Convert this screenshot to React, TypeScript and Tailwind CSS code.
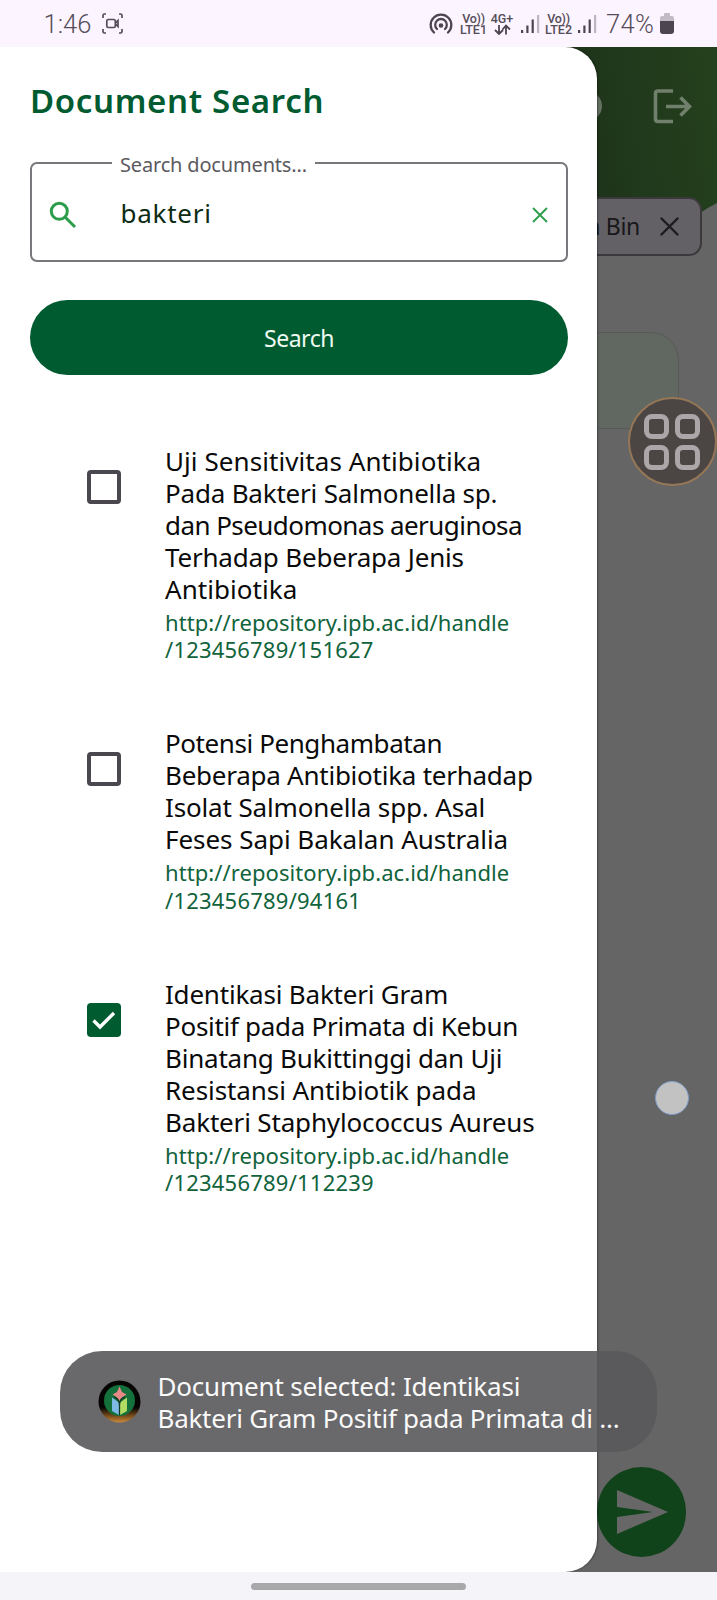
type DocLine = { text: string; tracking: string };
type Doc = { title: DocLine[]; url: DocLine[]; checked: boolean };

const docs: Doc[] = [
  {
    checked: false,
    title: [
      { text: "Uji Sensitivitas Antibiotika", tracking: "tracking-[0.07px]" },
      { text: "Pada Bakteri Salmonella sp.", tracking: "tracking-[-0.2px]" },
      { text: "dan Pseudomonas aeruginosa", tracking: "tracking-[-0.56px]" },
      { text: "Terhadap Beberapa Jenis", tracking: "tracking-[-0.2px]" },
      { text: "Antibiotika", tracking: "tracking-[0.05px]" },
    ],
    url: [
      { text: "http://repository.ipb.ac.id/handle", tracking: "tracking-[0.07px]" },
      { text: "/123456789/151627", tracking: "tracking-[0.2px]" },
    ],
  },
  {
    checked: false,
    title: [
      { text: "Potensi Penghambatan", tracking: "tracking-[-0.42px]" },
      { text: "Beberapa Antibiotika terhadap", tracking: "tracking-[-0.25px]" },
      { text: "Isolat Salmonella spp. Asal", tracking: "tracking-[-0.15px]" },
      { text: "Feses Sapi Bakalan Australia", tracking: "tracking-[-0.04px]" },
    ],
    url: [
      { text: "http://repository.ipb.ac.id/handle", tracking: "tracking-[0.07px]" },
      { text: "/123456789/94161", tracking: "tracking-[0.22px]" },
    ],
  },
  {
    checked: true,
    title: [
      { text: "Identikasi Bakteri Gram", tracking: "tracking-[-0.2px]" },
      { text: "Positif pada Primata di Kebun", tracking: "tracking-[-0.29px]" },
      { text: "Binatang Bukittinggi dan Uji", tracking: "tracking-[-0.22px]" },
      { text: "Resistansi Antibiotik pada", tracking: "tracking-[-0.08px]" },
      { text: "Bakteri Staphylococcus Aureus", tracking: "tracking-[-0.16px]" },
    ],
    url: [
      { text: "http://repository.ipb.ac.id/handle", tracking: "tracking-[0.07px]" },
      { text: "/123456789/112239", tracking: "tracking-[0.22px]" },
    ],
  },
];

function SignalBars() {
  return (
    <svg className="h-5 w-[19px] shrink-0" viewBox="0 0 19 20" fill="#4d4650">
      <rect x="0" y="16" width="2.2" height="3" />
      <rect x="5.3" y="11.5" width="2.2" height="7.5" />
      <rect x="10.6" y="5.5" width="2.2" height="13.5" />
      <rect x="16" y="1" width="2.2" height="18" fill="#bdb6c0" />
    </svg>
  );
}

function StatusBar() {
  return (
    <header className="flex h-[47px] shrink-0 items-center bg-[#fcf4ff] pl-[43.500px] font-[Roboto,sans-serif] text-[#554e58]">
      <span className="w-[58px] text-[25.500px] leading-[30px] font-light">1:46</span>
      <svg className="h-[21px] w-[21px]" viewBox="0 0 21 21" fill="none" stroke="#554e58" strokeWidth="1.7">
        <path d="M1 5V2.5Q1 1 2.5 1H4M17 1h1.500Q20 1 20 2.500V5M1 16v2.500Q1 20 2.500 20H4M17 20h1.500Q20 20 20 18.500V16" />
        <rect x="4.800" y="6.500" width="8.500" height="8" rx="1.500" />
        <path d="M13.500 9.800 16 7.500v6l-2.500-2.300" />
      </svg>
      <svg className="ml-[306.500px] h-[22px] w-[24px]" viewBox="0 0 24 22" fill="none" stroke="#4d4650" strokeWidth="2.300" strokeLinecap="round">
        <path d="M5 19.500A10.300 10.300 0 1 1 19 19.500" />
        <path d="M8 16A5.800 5.800 0 1 1 16 16" />
        <circle cx="12" cy="12.500" r="1.200" fill="#4d4650" />
      </svg>
      <div className="ml-[7px] flex w-[27px] flex-col items-center text-[12.500px] leading-[11px] font-medium">
        <span className="tracking-[-0.3px]">Vo))</span>
        <span>LTE1</span>
      </div>
      <div className="ml-[3px] flex w-[24px] flex-col items-center text-[12.500px] leading-[11px] font-medium">
        <span>4G+</span>
        <svg className="h-[11px] w-[17px]" viewBox="0 0 17 11" fill="none" stroke="#4d4650" strokeWidth="1.800">
          <path d="M5 1v8.500M1 6l4 4 4-4M12 10.500V2M8.500 5.500 12 1.500l4 4" />
        </svg>
      </div>
      <div className="ml-[7px]"><SignalBars /></div>
      <div className="ml-[5px] flex w-[27px] flex-col items-center text-[12.500px] leading-[11px] font-medium">
        <span className="tracking-[-0.3px]">Vo))</span>
        <span>LTE2</span>
      </div>
      <div className="ml-[6px]"><SignalBars /></div>
      <span className="ml-[9px] w-[54px] text-[25.500px] leading-[30px] font-light tracking-[0.3px]">74%</span>
      <svg className="h-[21px] w-[14px] shrink-0" viewBox="0 0 14 21">
        <path d="M4 1Q4 0 5 0h4q1 0 1 1v2h2q2 0 2 2v4H0V5q0-2 2-2h2z" fill="#c3bcc6" />
        <path d="M0 8h14v10q0 3-3 3H3q-3 0-3-3z" fill="#4d4650" />
      </svg>
    </header>
  );
}

function Backdrop() {
  return (
    <div className="absolute inset-0 overflow-hidden bg-[#656565]">
      <svg className="absolute top-0 right-0 h-[190px] w-[160px]" viewBox="0 0 160 190">
        <defs>
          <linearGradient id="leaf" x1="0" y1="0.600" x2="1" y2="0.400">
            <stop offset="0.200" stopColor="#1e341b" />
            <stop offset="1" stopColor="#24401c" />
          </linearGradient>
        </defs>
        <path d="M0 0H160V156Q152 160 143 166L120 176L0 190Z" fill="url(#leaf)" />
      </svg>
      <div className="absolute top-[44px] left-[572px] size-[30px] rounded-full bg-[#667063]" />
      <svg className="absolute top-[42px] left-[653px] h-[35px] w-[39px]" viewBox="0 0 39 35" fill="none" stroke="#71806c" strokeWidth="3.600">
        <path d="M20 2H5Q2.500 2 2.500 4.500v25.500Q2.500 32.500 5 32.500h15M13 17.500h23.500M27.500 8.500l9 9-9 9" />
      </svg>
      <div className="absolute top-[150px] left-[480px] flex h-[59px] w-[222px] items-center justify-end rounded-[13px] border-2 border-[#3b393c] bg-[#636165] pr-[21px] font-['Noto_Sans',sans-serif] text-[#18171a]">
        <span className="-mt-[2px] text-[23px] leading-[32px] tracking-[-0.3px] whitespace-nowrap">Kebun Bin</span>
        <svg className="ml-[20px] size-[19px]" viewBox="0 0 19 19" stroke="#1d1b1f" strokeWidth="2.400" strokeLinecap="round">
          <path d="M1.500 1.500l16 16M17.500 1.500l-16 16" />
        </svg>
      </div>
      <div className="absolute top-[285px] left-[400px] h-[97px] w-[279px] rounded-[28px] border-[1.500px] border-[#585a58] bg-[#616761]" />
      <div className="absolute top-[1420px] left-[597px] flex h-[90px] w-[89px] items-center justify-center rounded-full bg-[#10431a] pl-[1px]">
        <svg className="h-[44px] w-[51px]" viewBox="0 0 51 44" fill="#676767">
          <path d="M0 0 51 22 0 44V27L36 22 0 17Z" />
        </svg>
      </div>
    </div>
  );
}

function FloatingMenu() {
  return (
    <>
      <div className="absolute top-[350px] left-[628px] flex size-[89px] items-center justify-center rounded-full border-2 border-[#957757] bg-[#4a4442]/95 pr-[2px]">
        <div className="grid grid-cols-2 gap-[6px]">
          {[0, 1, 2, 3].map((n) => (
            <span key={n} className="size-[25px] rounded-[8px] border-[5px] border-[#aba7a8]" />
          ))}
        </div>
      </div>
      <div className="absolute top-[1034px] left-[655px] size-[34px] rounded-full border border-[#7f9cc9] bg-[#c2c2c3]" />
    </>
  );
}

function Checkbox({ checked }: { checked: boolean }) {
  return checked ? (
    <span className="mt-[25px] flex size-[34px] shrink-0 items-center justify-center rounded-[4px] bg-[#005b30]">
      <svg className="h-[20px] w-[24px]" viewBox="0 0 24 20" fill="none" stroke="#fff" strokeWidth="3.400">
        <path d="M1.500 10.500l6.500 6.500L22 3" />
      </svg>
    </span>
  ) : (
    <span className="mt-[25px] size-[34px] shrink-0 rounded-[4px] border-[4px] border-[#4a474e]" />
  );
}

function Drawer() {
  return (
    <aside className="absolute top-0 left-0 h-[1525px] w-[597px] rounded-r-[32px] bg-white pl-[30px] shadow-[1px_0_2px_rgba(0,0,0,0.35)]">
      <h1 className="pt-[31px] text-[33px] leading-[46px] font-semibold tracking-[0.66px] whitespace-nowrap text-[#005b30]">
        Document Search
      </h1>
      <div className="relative mt-[38px] flex h-[100px] w-[538px] items-center rounded-[7px] border-2 border-[#79767c]">
        <span className="absolute -top-[14px] left-[80px] bg-white px-[8px] text-[20px] leading-[30px] tracking-[-0.17px] whitespace-nowrap text-[#5b595e]">
          Search documents...
        </span>
        <svg className="mt-[5px] ml-[17px] size-[28px]" viewBox="0 0 28 28" fill="none" stroke="#2c9e4b" strokeWidth="3">
          <circle cx="10.300" cy="10.300" r="8" />
          <path d="M16 16l10 10" />
        </svg>
        <span className="mt-[2px] ml-[43.500px] text-[26px] leading-[36px] tracking-[0.75px] text-[#0b2b12]">bakteri</span>
        <svg className="mt-[6px] mr-[18px] ml-auto size-[16px]" viewBox="0 0 16 16" stroke="#2c9e4b" strokeWidth="1.900">
          <path d="M1 1l14 14M15 1 1 15" />
        </svg>
      </div>
      <button className="mt-[38px] flex h-[75px] w-[538px] items-center justify-center rounded-full bg-[#005b30] pt-[1px] text-[23px] leading-[32px] tracking-[-0.5px] text-[#eefaf1]">
        Search
      </button>
      <ul className="mt-[69.500px] flex flex-col gap-[63.500px] pl-[57px]">
        {docs.map((doc, i) => (
          <li key={i} className="flex items-start">
            <Checkbox checked={doc.checked} />
            <div className="ml-[44px]">
              <p className="text-[26px] leading-[32px] text-[#0a0a0a]">
                {doc.title.map((l) => (
                  <span key={l.text} className={`block w-fit whitespace-nowrap ${l.tracking}`}>{l.text}</span>
                ))}
              </p>
              <p className="mt-[4px] text-[22px] leading-[27.500px] text-[#10633b]">
                {doc.url.map((l) => (
                  <span key={l.text} className={`block w-fit whitespace-nowrap ${l.tracking}`}>{l.text}</span>
                ))}
              </p>
            </div>
          </li>
        ))}
      </ul>
    </aside>
  );
}

function Toast() {
  return (
    <div className="absolute top-[1304px] left-[60px] flex h-[101px] w-[597px] items-center rounded-[42px] bg-[#59585a]/90 pl-[38px]">
      <svg className="size-[43px] shrink-0" viewBox="0 0 43 43">
        <defs>
          <linearGradient id="ring" x1="0" y1="0" x2="0" y2="1">
            <stop offset="0.650" stopColor="#060504" />
            <stop offset="0.850" stopColor="#7c4f1c" />
            <stop offset="1" stopColor="#c98a3c" />
          </linearGradient>
        </defs>
        <circle cx="21.500" cy="21.500" r="21" fill="url(#ring)" />
        <circle cx="21.500" cy="20.500" r="15.500" fill="#14713c" />
        <path d="M14 17.500 21 22.500V35L14 31Z" fill="#7fb9e6" />
        <path d="M29 17.500 22 22.500V35L29 31Z" fill="#b3dc62" />
        <path d="M21.500 6.500 24 12l4.500 2.500L24 17.500l-2.500 5-2.500-5-4.500-3L19 12Z" fill="#e58a86" />
        <path d="M16 17q5.500 1.500 5.500 8 0-6.500 5.500-8M21.500 22v13" stroke="#0d3b25" strokeWidth="1.300" fill="none" />
      </svg>
      <p className="ml-[16.500px] text-[26px] leading-[32px] whitespace-nowrap text-[#fafafa]">
        <span className="block w-fit tracking-[-0.2px]">Document selected: Identikasi</span>
        <span className="block w-fit tracking-[-0.25px]">Bakteri Gram Positif pada Primata di ...</span>
      </p>
    </div>
  );
}

export default function App() {
  return (
    <div className="flex h-[1600px] w-[717px] flex-col overflow-hidden bg-[#f5f4f8] font-['Noto_Sans',sans-serif]">
      <StatusBar />
      <main className="relative h-[1525px] shrink-0 overflow-hidden">
        <Backdrop />
        <Drawer />
        <FloatingMenu />
        <Toast />
      </main>
      <footer className="flex h-[28px] items-start justify-center pt-[11px]">
        <span className="h-[7px] w-[215px] rounded-full bg-[#a8a8aa]" />
      </footer>
    </div>
  );
}
